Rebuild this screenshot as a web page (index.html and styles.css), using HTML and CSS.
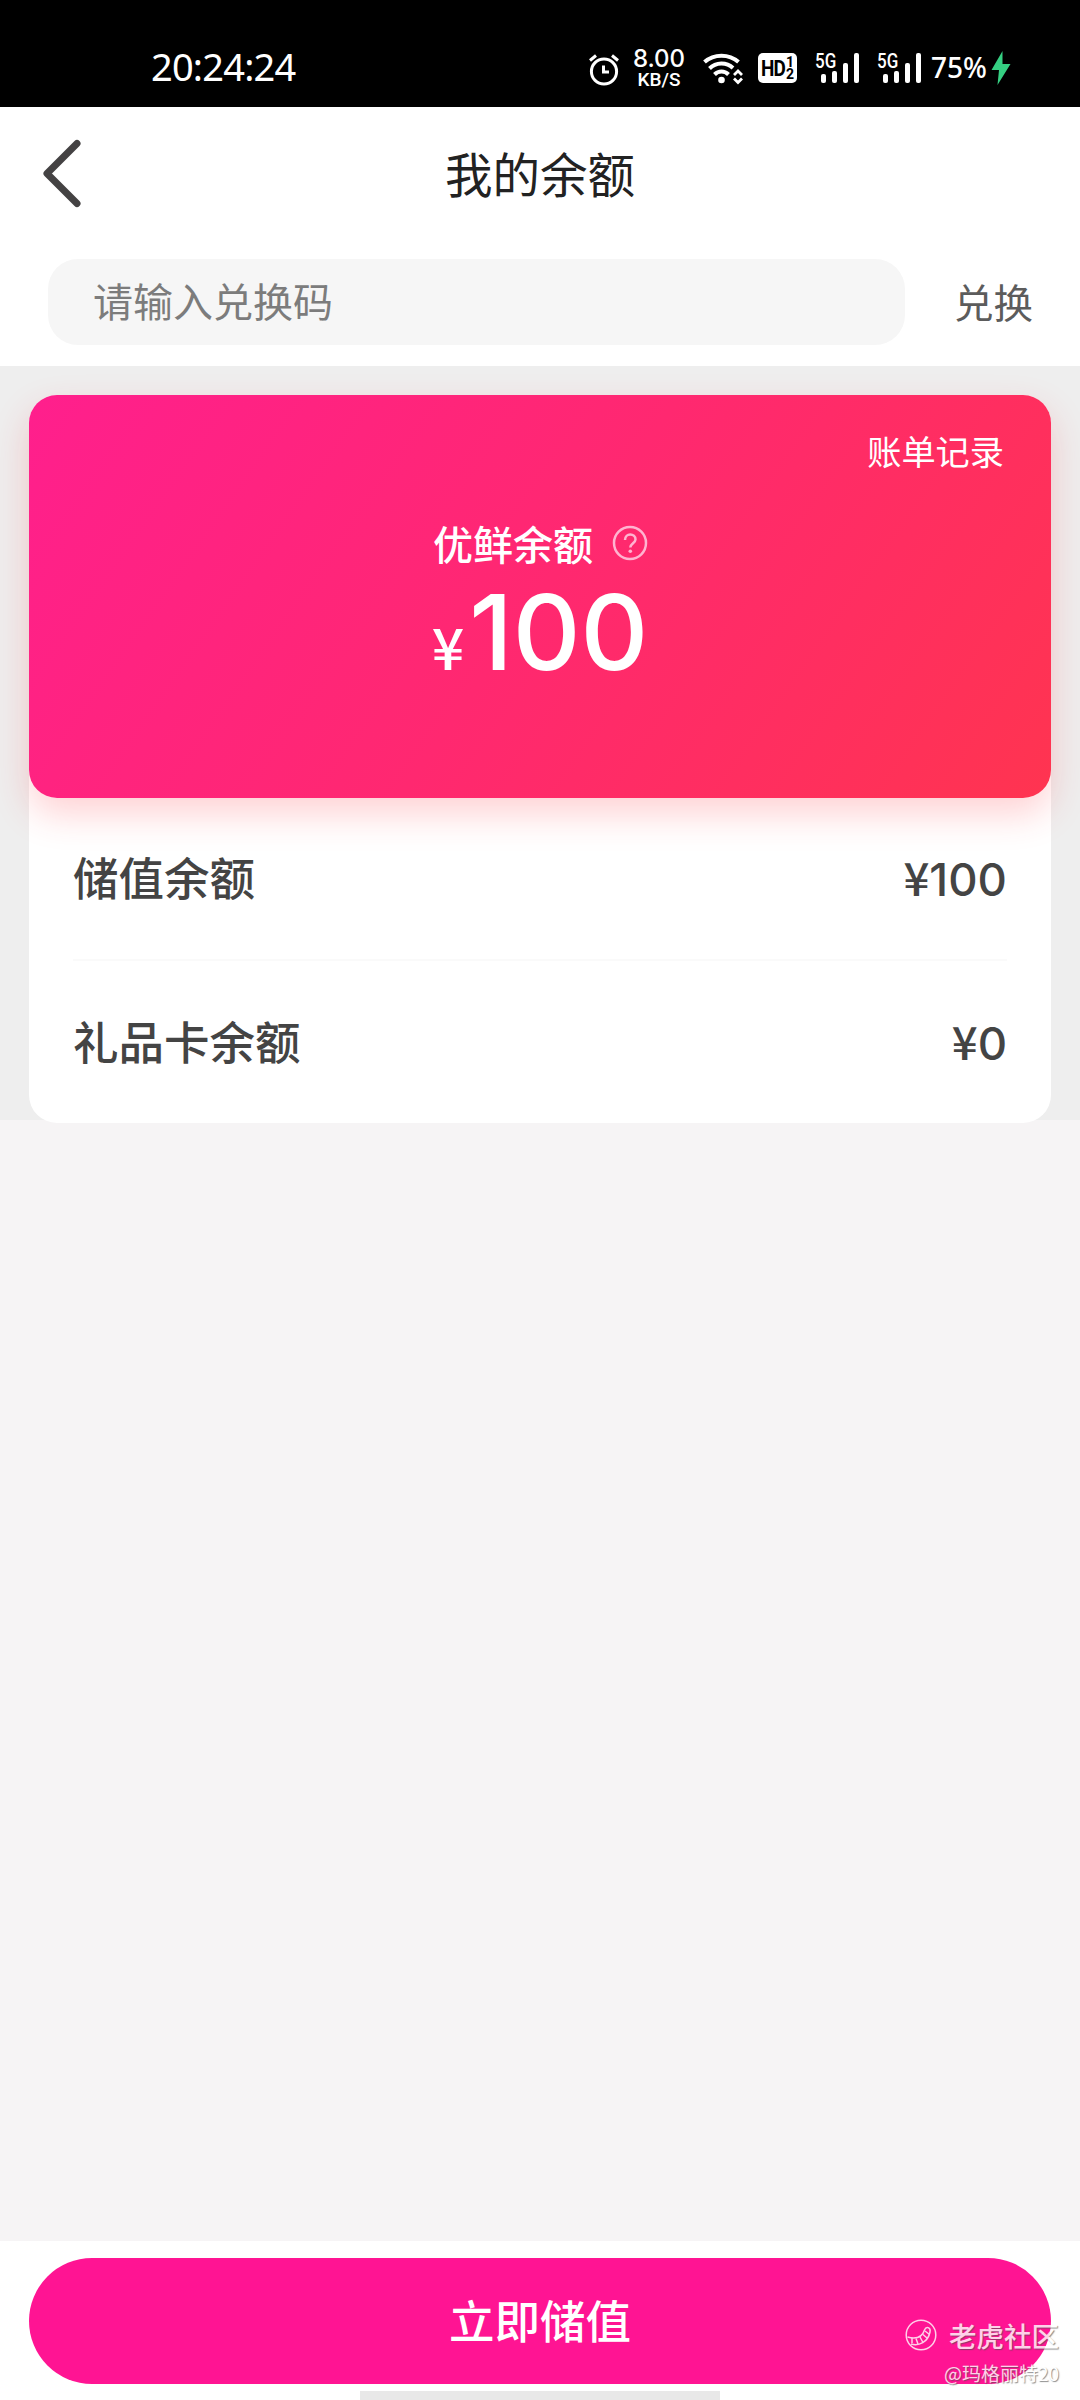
FILE: index.html
```html
<!DOCTYPE html>
<html lang="zh-CN">
<head>
<meta charset="utf-8">
<title>我的余额</title>
<link rel="stylesheet" href="styles.css">
</head>
<body>
<div class="screen">
  <div class="status">
    <span class="time">20:24:24</span>
    <div class="indicators">
      <svg class="alarm" width="30" height="33" viewBox="0 0 30 33" fill="none" stroke="#fff" stroke-width="3"><circle cx="15" cy="18.5" r="12.6"/><path d="M1 7.500L7 2.500M29 7.500L23 2.500"/><path d="M14.5 12.5V19H20"/></svg>
      <div class="speed"><span class="rate">8.00</span><span class="unit">KB/S</span></div>
      <svg class="wifi" width="40" height="32" viewBox="0 0 40 32" fill="none" stroke="#fff" stroke-width="4"><path d="M1.5 9C11 0.500 26 0.500 35.500 9"/><path d="M6.500 15.500C13 9 23.500 9 30 15"/><path d="M11.500 21.500C15.500 17.500 21.500 17.500 25.500 21.500"/><circle cx="18.500" cy="27" r="3.300" fill="#fff" stroke="none"/><path d="M31 22l4-4 4 4M31 25.500l4 4 4-4" stroke-width="2.800"/></svg>
      <div class="hd"><span class="hd-text">HD</span><span class="hd-sims"><i>1</i><i>2</i></span></div>
      <div class="signal"><span>5G</span><svg width="39" height="31" viewBox="0 0 39 31" fill="#fff"><rect y="21" width="5" height="9" rx="2"/><rect x="11" y="18" width="5" height="12" rx="2"/><rect x="22" y="10" width="5" height="20" rx="2"/><rect x="33" width="5" height="30" rx="2"/></svg></div>
      <div class="signal second"><span>5G</span><svg width="39" height="31" viewBox="0 0 39 31" fill="#fff"><rect y="21" width="5" height="9" rx="2"/><rect x="11" y="18" width="5" height="12" rx="2"/><rect x="22" y="10" width="5" height="20" rx="2"/><rect x="33" width="5" height="30" rx="2"/></svg></div>
      <span class="percent">75%</span>
      <svg class="bolt" width="20" height="36" viewBox="0 0 20 36" fill="#35cf82"><path d="M11.500 1L0.500 20H8L6.500 35L19.500 14H11.500Z"/></svg>
    </div>
  </div>

  <header class="header">
    <svg class="back" width="40" height="70" viewBox="0 0 40 70" fill="none" stroke="#444243" stroke-width="7" stroke-linecap="round" stroke-linejoin="round"><path d="M35 4.500L5 34.500L35 64.500"/></svg>
    <h1>我的余额</h1>
  </header>
  <div class="redeem">
    <div class="code">请输入兑换码</div>
    <div class="redeem-action">兑换</div>
  </div>

  <main class="content">
    <section class="wallet">
      <div class="card">
        <div class="records">账单记录</div>
        <div class="card-title"><span>优鲜余额</span>
          <svg width="36" height="36" viewBox="0 0 36 36" fill="none" stroke="#ffb4d0" stroke-width="2.500"><circle cx="18" cy="18" r="16"/><path d="M13 15C13 7.500 23.500 8 23.500 14.500C23.500 18 18.300 18.500 18.300 22.500"/><circle cx="18.300" cy="26.300" r="1.800" fill="#ffb4d0" stroke="none"/></svg>
        </div>
        <div class="total"><span class="yen">¥</span><span class="amount">100</span></div>
      </div>
      <div class="row"><span>储值余额</span><span class="value"><b>¥</b>100</span></div>
      <div class="row last"><span>礼品卡余额</span><span class="value"><b>¥</b>0</span></div>
    </section>
  </main>

  <footer class="footer">
    <div class="button">立即储值</div>
    <div class="home"></div>
  </footer>

  <div class="watermark">
    <div class="brand"><svg width="32" height="32" viewBox="0 0 32 32" fill="none" stroke="#fff" stroke-width="1.500"><circle cx="16" cy="16" r="14.800"/><path d="M2.500 18C10 20 17 19 19.500 11C21 7 26 8 25 13C23 23 14 27.500 6 25"/><path d="M7 19V24M11 19.500L13 25M15 18L18 23.500M18 15.500L22.500 19.500M20 12L24.500 15.500"/></svg><span>老虎社区</span></div>
    <div class="author">@玛格丽特20</div>
  </div>
</div>
</body>
</html>
```
FILE: styles.css
```css
* { box-sizing: border-box; }
body { margin: 0; font-family: "Noto Sans CJK SC", sans-serif; }
svg { display: block; flex: none; }
.screen { position: relative; display: flex; flex-direction: column; width: 1080px; height: 2400px; background: #f6f4f5; overflow: hidden; white-space: nowrap; }

.status { display: flex; flex: none; height: 107px; background: #000; color: #fff; font-family: "Noto Sans", sans-serif; }
.time { width: 437px; margin-left: 151px; padding-top: 40px; font-size: 38px; line-height: 52px; letter-spacing: -0.8px; }
.indicators { display: flex; align-items: flex-start; }
.alarm { margin: 53px 0 0 1px; }
.speed { display: flex; flex-direction: column; align-items: center; width: 54px; margin: 47px 0 0 13px; }
.rate { font: 500 24px/24px Inter, sans-serif; }
.unit { font: 500 19px/18px Roboto, sans-serif; }
.wifi { margin: 53px 0 0 17px; }
.hd { display: flex; justify-content: center; width: 39px; height: 30px; margin: 53px 0 0 15px; border-radius: 5px; background: #fff; color: #000; font-family: Roboto, sans-serif; font-weight: 700; }
.hd-text { font-size: 22px; line-height: 31px; letter-spacing: -1px; transform: scaleX(.86); margin: 0 -1px 0 -2px; }
.hd-sims { display: flex; flex-direction: column; padding-top: 3px; font-size: 14px; line-height: 12px; }
.hd-sims i { font-style: normal; }
.signal { display: flex; position: relative; width: 44px; margin: 53px 0 0 18px; padding-left: 6px; }
.signal span { position: absolute; left: 0; top: -1px; font: 500 20px/18px Roboto, sans-serif; transform: scaleX(.85); transform-origin: left; }
.signal.second { margin-left: 18px; }
.percent { width: 60px; margin: 48px 0 0 10px; font-size: 28px; line-height: 38px; font-weight: 500; }
.bolt { margin-top: 50px; }

.header { display: flex; flex: none; align-items: center; height: 135px; padding-left: 42px; background: #fff; }
.back { margin-top: -2px; }
h1 { flex: 1; margin: -5px 82px 0 0; text-align: center; font-size: 47.500px; font-weight: 400; color: #222; }
.redeem { display: flex; flex: none; height: 124px; padding: 17px 0 0 48px; background: #fff; }
.code { width: 857px; height: 86px; padding-left: 45px; border-radius: 30px; background: #f6f6f6; color: #7c7c7c; font-size: 40px; line-height: 82px; }
.redeem-action { margin-left: 49px; color: #5c5c5c; font-size: 39.500px; line-height: 83px; }

.content { flex: none; height: 754px; padding: 29px 29px 0; background: #eeeeee; }
.wallet { height: 728px; border-radius: 28px; background: #fff; }
.card { display: flex; flex-direction: column; align-items: center; height: 403px; border-radius: 28px; color: #fff; background: linear-gradient(125deg, #ff1f8d 0%, #ff2870 50%, #ff3450 100%); box-shadow: 0 16px 36px rgba(255, 50, 60, .22); }
.records { align-self: flex-end; margin: 32px 47px 0 0; font-size: 34.200px; line-height: 47px; }
.card-title { display: flex; align-items: center; gap: 19px; margin: 39px 0 0 1px; font-size: 40px; line-height: 60px; font-weight: 500; }
.total { display: flex; align-items: baseline; gap: 5px; margin-top: 7px; line-height: 104px; }
.yen { font-size: 57px; font-weight: 500; }
.amount { font: 500 105px/104px Inter, sans-serif; }
.row { display: flex; justify-content: space-between; height: 163px; margin: 0 44px; border-bottom: 2px solid #fafafa; color: #444; font-size: 45.500px; line-height: 157px; font-weight: 500; }
.row.last { border: 0; line-height: 159px; }
.value { font-family: Inter, sans-serif; font-size: 45.500px; }
.value b { font-family: "Noto Sans CJK SC", sans-serif; font-weight: 500; }

.footer { display: flex; flex-direction: column; align-items: center; height: 159px; margin-top: auto; padding-top: 17px; background: #fff; }
.button { width: 1022px; height: 127px; border-radius: 64px; background: #ff1493; color: #fff; text-align: center; font-size: 45.500px; line-height: 123px; font-weight: 500; }
.home { width: 360px; height: 9px; margin-top: 7px; background: #e8e8e8; }

.watermark { position: absolute; right: 21px; top: 2314px; display: flex; flex-direction: column; align-items: flex-end; color: #fff; opacity: .8; text-shadow: 1px 1px 1px rgba(80,80,80,.8); }
.brand { display: flex; align-items: center; gap: 12px; height: 42px; font-size: 27.500px; font-weight: 500; line-height: 40px; }
.author { margin-top: 3px; font-size: 19px; line-height: 28px; }
```
